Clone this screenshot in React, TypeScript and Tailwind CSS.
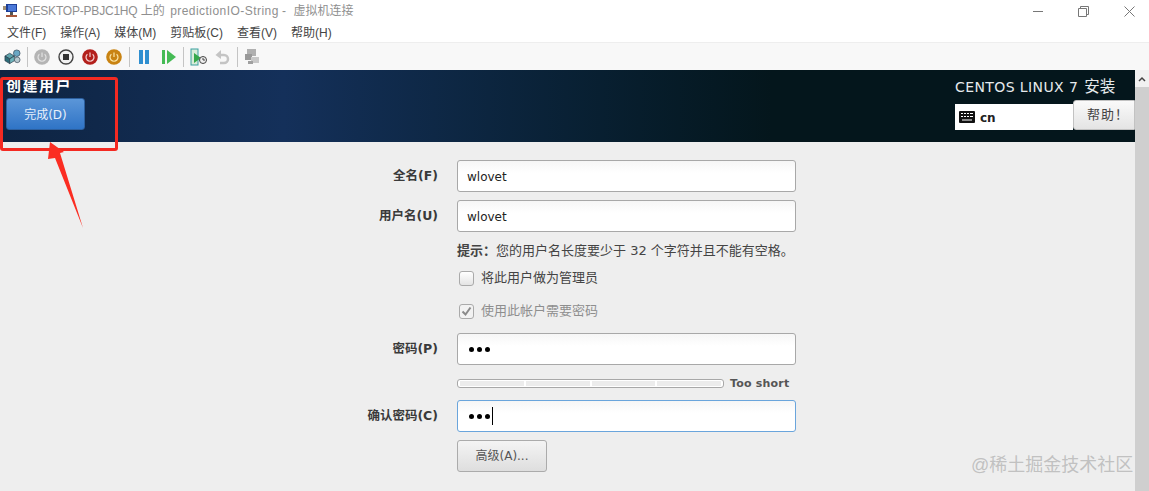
const chrome = "font-['Liberation_Sans','Noto_Sans_CJK_SC',sans-serif]";
const guest = "font-['DejaVu_Sans','Noto_Sans_CJK_SC',sans-serif]";

function VmIcon() {
  return (
    <svg width="16" height="16" viewBox="0 0 16 16" className="mr-[5px]">
      <rect x="3" y="1" width="11" height="8" fill="#1d3f98" />
      <rect x="5" y="2" width="8" height="6" fill="#4a78d8" />
      <rect x="0" y="3" width="3" height="4" fill="#a08f74" />
      <rect x="7" y="9" width="3" height="3" fill="#555" />
      <rect x="3" y="12" width="11" height="2" fill="#a5583a" />
    </svg>
  );
}

function ConnectIcon() {
  return (
    <svg width="17" height="18" viewBox="0 0 18 18">
      <path d="M1 8l5-3 5 3-5 3z" fill="#5fa3ab" stroke="#234" strokeWidth="0.7" />
      <path d="M1 8v5l5 3v-5z" fill="#2c6d78" stroke="#234" strokeWidth="0.7" />
      <path d="M6 11v5l5-3V8z" fill="#6fb4bb" stroke="#234" strokeWidth="0.7" />
      <circle cx="13.500" cy="5" r="3.500" fill="#6aa7c4" stroke="#345" strokeWidth="0.7" />
      <circle cx="14" cy="12" r="3" fill="#b7c9cf" stroke="#345" strokeWidth="0.7" />
    </svg>
  );
}

function Power({ bg, ring }: { bg: string; ring: string }) {
  return (
    <svg width="16" height="16" viewBox="0 0 16 16">
      <circle cx="8" cy="8" r="7.800" fill={bg} />
      <path d="M5.400 5.200a4 4 0 1 0 5.200 0" fill="none" stroke={ring} strokeWidth="1.200" />
      <path d="M8 3.500v4.500" stroke={ring} strokeWidth="1.200" />
    </svg>
  );
}

function Sep() {
  return <div className="w-px h-[20px] bg-[#c4c4c4]" />;
}

function Field({ label, children }: { label: string; children: React.ReactNode }) {
  return (
    <div className="flex items-center">
      <label className="w-[78px] mr-[19px] pt-[1px] text-right text-[12.5px] font-bold text-[#3a3a3a] whitespace-nowrap">
        {label}
      </label>
      {children}
    </div>
  );
}

function TextBox({ focus, children }: { focus?: boolean; children: React.ReactNode }) {
  return (
    <div
      className={`w-[339px] h-[32px] rounded-[3px] border flex items-center px-[9px] bg-gradient-to-b from-[#f6f6f6] to-white to-40% ${
        focus ? "border-[#6aa5dc]" : "border-[#a8a8a8]"
      }`}
    >
      {children}
    </div>
  );
}

function Dots({ caret }: { caret?: boolean }) {
  return (
    <div className="flex items-center gap-[3px] pl-[2px]">
      <span className="w-[5px] h-[5px] rounded-full bg-black" />
      <span className="w-[5px] h-[5px] rounded-full bg-black" />
      <span className="w-[5px] h-[5px] rounded-full bg-black" />
      {caret && <span className="w-px h-[18px] bg-black ml-[-1px]" />}
    </div>
  );
}

export default function App() {
  return (
    <div className={`relative w-[1149px] h-[491px] overflow-hidden bg-white ${chrome}`}>
      {/* window chrome */}
      <div className="h-[22px] flex items-center pl-[3px] pr-[14px] text-[12px] text-[#8f8f8f]">
        <VmIcon />
        <span className="whitespace-nowrap">
          <span className="tracking-[-0.2px]">DESKTOP-PBJC1HQ</span> 上的{" "}
          <span className="ml-[2px] tracking-[0.45px]">predictionIO-String</span> -{" "}
          <span className="ml-[4px]">虚拟机连接</span>
        </span>
        <div className="ml-auto flex items-center gap-[35px]">
          <div className="w-[10px] h-px bg-[#777]" />
          <svg width="11" height="11" viewBox="0 0 11 11" fill="none" stroke="#777">
            <path d="M.5 2.500h8v8h-8zM2.500 2.500v-2h8v8h-2" />
          </svg>
          <svg width="11" height="11" viewBox="0 0 11 11" stroke="#777">
            <path d="M.5.5l10 10M10.500.5l-10 10" />
          </svg>
        </div>
      </div>
      <div className="h-[20px] pt-[2px] flex items-center gap-[14px] pl-[7px] text-[12px] text-[#444]">
        <span>文件(F)</span>
        <span>操作(A)</span>
        <span>媒体(M)</span>
        <span>剪贴板(C)</span>
        <span>查看(V)</span>
        <span>帮助(H)</span>
      </div>
      <div className="h-[28px] bg-[#f8f8f8] border-t border-[#eeeeee] flex items-center pl-[4px]">
        <ConnectIcon />
        <div className="ml-[6px] mr-[6px]">
          <Sep />
        </div>
        <div className="flex items-center gap-[8px]">
          <Power bg="#b4b4b4" ring="#e2e2e2" />
          <svg width="16" height="16" viewBox="0 0 16 16">
            <circle cx="8" cy="8" r="7" fill="#f2f2f2" stroke="#444" strokeWidth="1.400" />
            <rect x="5" y="5" width="6" height="6" fill="#333" />
          </svg>
          <Power bg="#b3201c" ring="#f4d0d0" />
          <Power bg="#c98312" ring="#fbe6a8" />
        </div>
        <div className="ml-[7px] mr-[9px]">
          <Sep />
        </div>
        <svg width="11" height="16" viewBox="0 0 11 16">
          <rect x="0" y="1" width="4" height="14" fill="#2f8fd0" />
          <rect x="6" y="1" width="4" height="14" fill="#2f8fd0" />
        </svg>
        <svg width="14" height="16" viewBox="0 0 14 16" className="ml-[12px]">
          <rect x="0" y="1" width="3" height="14" fill="#45bb55" />
          <path d="M5 1l9 7-9 7z" fill="#45bb55" />
        </svg>
        <div className="ml-[7px] mr-[6px]">
          <Sep />
        </div>
        <svg width="17" height="18" viewBox="0 0 17 18">
          <rect x="1" y="1" width="7" height="16" fill="#d9ecd9" stroke="#3aa0a0" />
          <path d="M4 5l7 5-7 5z" fill="#35a84a" />
          <circle cx="13" cy="12" r="3.500" fill="#eee" stroke="#444" />
          <path d="M13 10v2h2" stroke="#444" fill="none" />
        </svg>
        <svg width="16" height="16" viewBox="0 0 16 16" fill="none" className="ml-[7px]">
          <path d="M4 6h6a4 4 0 0 1 0 8H6" stroke="#c4c4c4" strokeWidth="2.500" />
          <path d="M7 1L1.500 6 7 10z" fill="#c4c4c4" />
        </svg>
        <div className="ml-[7px] mr-[6px]">
          <Sep />
        </div>
        <svg width="16" height="17" viewBox="0 0 16 17">
          <rect x="3" y="1" width="9" height="7" fill="#b0b0b0" />
          <rect x="1" y="6" width="7" height="6" fill="#999" />
          <rect x="7" y="9" width="8" height="6" fill="#c8c8c8" />
          <rect x="4" y="13" width="5" height="3" fill="#a0a0a0" />
        </svg>
      </div>

      <div className={`flex h-[421px] ${guest}`}>
        <div className="w-[1135px] bg-[#eeeeee]">
          {/* installer header */}
          <div className="h-[72px] flex justify-between bg-gradient-to-r from-[#0e2442] via-[#14305a] via-25% to-[#04161c] to-68%">
            <div className="pl-[6px] pt-[7px]">
              <div className="text-[15px] leading-[18px] font-bold text-white tracking-[1.500px] whitespace-nowrap">创建用户</div>
              <button className="mt-[3px] pt-[1px] w-[79px] h-[32px] rounded-[3px] border border-[#2c5f9e] bg-gradient-to-b from-[#5b96d8] to-[#2f74c6] text-[12px] text-[#e8f0fa]">
                完成(D)
              </button>
            </div>
            <div className="w-[180px] pt-[8px]">
              <div className="text-[14px] leading-[18px] text-[#e6eaec] tracking-[0.4px] whitespace-nowrap">
                CENTOS LINUX 7<span className="ml-[6px] text-[15.5px] tracking-normal">安装</span>
              </div>
              <div className="flex items-start mt-[8px]">
                <div className="w-[119px] h-[26px] bg-white flex items-center pl-[4px] gap-[5px]">
                  <svg width="16" height="12" viewBox="0 0 16 12">
                    <rect width="16" height="12" rx="1" fill="#111" />
                    <path
                      d="M2 2.500h2M5 2.500h2M8 2.500h2M11 2.500h3M2 5.500h2M5 5.500h2M8 5.500h2M11 5.500h3M3 9h10"
                      stroke="#fff"
                      strokeWidth="1.200"
                    />
                  </svg>
                  <span className="pt-[1px] text-[12px] font-bold text-[#222]">cn</span>
                </div>
                <button className="w-[62px] h-[30px] mt-[-4px] pl-[8px] shrink-0 rounded-l-[3px] border border-[#c2c2c2] bg-gradient-to-b from-[#fafafa] to-[#e4e4e4] text-[13px] text-[#444] tracking-[1px]">
                  帮助！
                </button>
              </div>
            </div>
          </div>

          {/* form */}
          <div className="pl-[360px] pt-[18px]">
            <div className="flex flex-col gap-[8px]">
              <Field label="全名(F)">
                <TextBox>
                  <span className="pt-[1px] text-[12px] text-[#222]">wlovet</span>
                </TextBox>
              </Field>
              <Field label="用户名(U)">
                <TextBox>
                  <span className="pt-[1px] text-[12px] text-[#222]">wlovet</span>
                </TextBox>
              </Field>
            </div>
            <div className="ml-[97px] mt-[9px] h-[20px] text-[13px] leading-[20px] text-[#444] whitespace-nowrap">
              <b>提示：</b>您的用户名长度要少于 32 个字符并且不能有空格。
            </div>
            <div className="ml-[99px] mt-[8px] flex items-center gap-[7px] h-[18px] text-[13px] text-[#444]">
              <span className="w-[15px] h-[15px] rounded-[3px] border border-[#aaa] bg-gradient-to-b from-white to-[#e4e4e4]" />
              将此用户做为管理员
            </div>
            <div className="ml-[99px] mt-[15px] flex items-center gap-[7px] h-[18px] text-[13px] text-[#8e8e8e]">
              <span className="w-[15px] h-[15px] rounded-[3px] border border-[#aaa] bg-[#f2f2f2] flex items-center justify-center">
                <svg width="11" height="11" viewBox="0 0 11 11" fill="none">
                  <path d="M1.500 5.500l3 3 5-7" stroke="#8a8a8a" strokeWidth="2" />
                </svg>
              </span>
              使用此帐户需要密码
            </div>
            <div className="mt-[13px]">
              <Field label="密码(P)">
                <TextBox>
                  <Dots />
                </TextBox>
              </Field>
            </div>
            <div className="ml-[97px] mt-[10px] flex items-center h-[16px]">
              <div className="w-[267px] h-[9px] rounded-[3px] border border-[#a8a8a8] bg-white px-[2px] py-[1px] flex gap-[2px]">
                <span className="flex-1 bg-[#ececec]" />
                <span className="flex-1 bg-[#ececec]" />
                <span className="flex-1 bg-[#ececec]" />
                <span className="flex-1 bg-[#ececec]" />
              </div>
              <span className="ml-[6px] pt-[2px] text-[11px] font-bold text-[#555] tracking-[0.2px] whitespace-nowrap">
                Too short
              </span>
            </div>
            <div className="mt-[9px]">
              <Field label="确认密码(C)">
                <TextBox focus>
                  <Dots caret />
                </TextBox>
              </Field>
            </div>
            <button className="ml-[97px] mt-[8px] w-[90px] h-[32px] rounded-[3px] border border-[#ababab] bg-gradient-to-b from-[#f4f4f4] to-[#dedede] text-[12px] text-[#555]">
              高级(A)...
            </button>
          </div>
        </div>

        {/* scrollbar */}
        <div className="w-[14px] flex flex-col bg-[#cfcfcf]">
          <div className="h-[17px] bg-[#f1f1f1] flex items-center justify-center">
            <svg width="8" height="6" viewBox="0 0 8 6" fill="none">
              <path d="M1 5l3-3 3 3" stroke="#444" strokeWidth="1.500" />
            </svg>
          </div>
        </div>
      </div>

      {/* annotation drawn over the screenshot */}
      <div className="absolute left-0 top-[77px] w-[118px] h-[74px] rounded-[3px] border-[3px] border-[#f42a22]" />
      <svg className="absolute left-[45px] top-[140px]" width="42" height="92" viewBox="0 0 42 92">
        <path d="M5 2L19 12 15 13 38 88 10 18 3 19z" fill="#fb2d22" />
      </svg>
      <div className="absolute left-[971px] top-[455px] text-[18px] leading-[20px] text-[#b5b5b5]/80 whitespace-nowrap">
        @稀土掘金技术社区
      </div>
    </div>
  );
}
